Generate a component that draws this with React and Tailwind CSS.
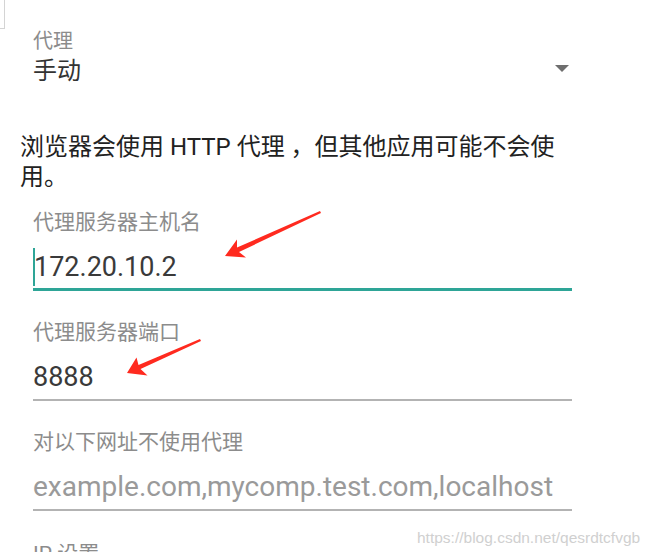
/**
 * Android Wi-Fi proxy settings (manual) — host / port / bypass fields, with annotation arrows.
 */
const FONT = "font-[Roboto,'Noto_Sans_CJK_SC',sans-serif]";

function Field({ label, children, focused }) {
  return (
    <div className="w-[539px]">
      <div className="text-[21px] leading-[24px] text-[#8c8c8c]">{label}</div>
      <div
        className={
          focused
            ? 'mt-[16px] border-b-[3px] border-[#2ea597] pb-[4px]'
            : 'mt-[16px] border-b-2 border-[#b3b3b3] pb-[5px]'
        }
      >
        {children}
      </div>
    </div>
  );
}

function Arrows() {
  return (
    <svg className="pointer-events-none absolute left-0 top-0" width="653" height="558" viewBox="0 0 653 558">
      {/* host arrow */}
      <polygon
        points="225,256 237,239.5 237,247.5 320,211 321,213 239,252 246,257.5"
        fill="#ff2a1f"
      />
      {/* port arrow */}
      <polygon
        points="127,373 136.5,357.5 138.5,365 200,339 201,341 140.5,369 147.5,375.5"
        fill="#ff2a1f"
      />
    </svg>
  );
}

export default function App() {
  return (
    <div className={`relative h-[558px] w-[653px] overflow-hidden bg-white ${FONT}`}>
      {/* leftover frame corner */}
      <div className="h-[29px] w-[5px] border-b border-r border-[#d4d4d4]" />

      {/* proxy spinner */}
      <div className="ml-[33px] w-[539px]">
        <div className="text-[20px] leading-[24px] text-[#8c8c8c]">代理</div>
        <div className="mt-[3px] flex items-start justify-between">
          <span className="text-[24px] leading-[30px] text-[#333]">手动</span>
          <span className="mr-[3px] mt-[9px] h-0 w-0 border-l-[7px] border-r-[7px] border-t-[7px] border-l-transparent border-r-transparent border-t-[#6e6e6e]" />
        </div>
      </div>

      <p className="ml-[20px] mt-[46px] w-[560px] text-[24px] leading-[30px] text-[#222]">
        浏览器会使用 HTTP 代理 ，但其他应用可能不会使用。
      </p>

      <div className="ml-[33px] mt-[18px] flex flex-col gap-[29px]">
        <Field label="代理服务器主机名" focused>
          <div className="flex h-[34px] items-center">
            <span className="h-[38px] w-[2px] shrink-0 bg-[#2ea597]" />
            <span className="-ml-[1px] text-[27px] leading-[34px] text-[#3a3a3a]">172.20.10.2</span>
          </div>
        </Field>
        <Field label="代理服务器端口">
          <div className="h-[34px] text-[27px] leading-[34px] text-[#3a3a3a]">8888</div>
        </Field>
        <Field label="对以下网址不使用代理">
          <div className="h-[34px] text-[28px] leading-[34px] text-[#9a9a9a]">example.com,mycomp.test.com,localhost</div>
        </Field>
      </div>

      {/* next section, cut off by the screenshot edge */}
      <div className="ml-[33px] mt-[31px] h-[10px] overflow-hidden">
        <div className="text-[21px] leading-[24px] text-[#8c8c8c]">IP 设置</div>
      </div>

      <Arrows />

      <span className="absolute left-[417px] top-[529px] font-['Liberation_Sans',Arial,sans-serif] text-[15.5px] leading-[18px] text-[#d0d0d0]">
        https://blog.csdn.net/qesrdtcfvgb
      </span>
    </div>
  );
}
